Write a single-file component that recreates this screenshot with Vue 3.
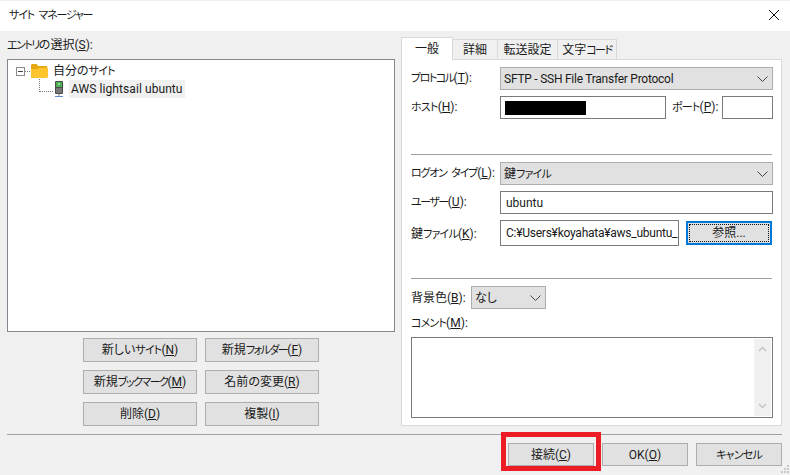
<script setup>
const siteButtons = [
  { pre: '新しい', tail: 'サイト', key: 'N' },
  { pre: '新規', tail: 'フォルダー', key: 'F' },
  { pre: '新規', tail: 'ブックマーク', key: 'M' },
  { pre: '名前の変更', tail: '', key: 'R' },
  { pre: '削除', tail: '', key: 'D' },
  { pre: '複製', tail: '', key: 'I' },
]
const tabs = [
  { pre: '一般', kana: '' },
  { pre: '詳細', kana: '' },
  { pre: '転送設定', kana: '' },
  { pre: '文字', kana: 'コード' },
]
</script>

<template>
  <div class="dialog">
    <header class="titlebar">
      <span class="k title">サイト マネージャー</span>
      <svg class="close" width="12" height="12" viewBox="0 0 12 12"><path d="M1 1l10 10M11 1L1 11" stroke="#111" stroke-width="1" fill="none"/></svg>
    </header>

    <div class="main">
      <section class="left">
        <div class="left-label"><span class="k narrow">エントリ</span>の選択(<u>S</u>):</div>
        <div class="tree">
          <div class="tree-row root-row">
            <span class="expander"><i></i></span>
            <span class="dots-h short"></span>
            <svg class="folder" width="17" height="14" viewBox="0 0 17 14">
              <path d="M0 1.500C0 .7.6 0 1.400 0h4.200l1.600 2H16v10.500c0 .8-.6 1.500-1.400 1.500H1.400C.6 14 0 13.300 0 12.500z" fill="#e3a812"/>
              <path d="M0 5h6.400l1.400-1.300H17V12.600c0 .8-.6 1.400-1.400 1.400H1.400C.6 14 0 13.400 0 12.600z" fill="#fdc42d"/>
            </svg>
            <span class="root-name">自分の<span class="k">サイト</span></span>
          </div>
          <div class="tree-row child-row">
            <span class="dots-l"></span>
            <svg class="server" width="9" height="17" viewBox="0 0 9 17">
              <rect x="0" y="0" width="8" height="13" rx="1" fill="#4c4c4c"/>
              <rect x="1" y="1" width="6" height="5" fill="#4caf50"/>
              <rect x="3" y="2" width="2" height="2" fill="#9ad79c"/>
              <rect x="1" y="7" width="6" height="5" fill="#777"/>
              <path d="M4 13v3" stroke="#777" fill="none"/>
              <path d="M0 15.500h8" stroke="#5b8fc7" fill="none"/>
            </svg>
            <span class="child-name">AWS lightsail ubuntu</span>
          </div>
        </div>
        <div class="site-buttons">
          <button v-for="b in siteButtons" :key="b.key" class="btn">{{ b.pre }}<span class="k" :class="{ narrow: b.tail.length > 3 }">{{ b.tail }}</span>(<u>{{ b.key }}</u>)</button>
        </div>
      </section>

      <section class="right">
        <div class="tabs">
          <div v-for="(t, i) in tabs" :key="t.pre" class="tab" :class="['tab' + i, { active: i === 0 }]">{{ t.pre }}<span class="k narrow">{{ t.kana }}</span></div>
        </div>
        <div class="panel">
          <div class="row r-protocol">
            <label class="lab"><span class="k narrow">プロトコル</span>(<u>T</u>):</label>
            <div class="select grow"><span class="latin">SFTP - SSH File Transfer Protocol</span><svg class="chev" width="11" height="6" viewBox="0 0 11 6"><path d="M.5.5l5 5 5-5" stroke="#444" fill="none"/></svg></div>
          </div>
          <div class="row r-host">
            <label class="lab"><span class="k">ホスト</span>(<u>H</u>):</label>
            <div class="input host"><span class="mask"></span></div>
            <label class="port-lab"><span class="k">ポート</span>(<u>P</u>):</label>
            <div class="input port"></div>
          </div>
          <div class="rule r1"></div>
          <div class="row r-logon">
            <label class="lab"><span class="k logon">ログオン タイプ</span>(<u>L</u>):</label>
            <div class="select grow"><span class="mixed">鍵<span class="k">ファイル</span></span><svg class="chev" width="11" height="6" viewBox="0 0 11 6"><path d="M.5.5l5 5 5-5" stroke="#444" fill="none"/></svg></div>
          </div>
          <div class="row r-user">
            <label class="lab"><span class="k narrow">ユーザー</span>(<u>U</u>):</label>
            <div class="input grow user">ubuntu</div>
          </div>
          <div class="row r-key">
            <label class="lab key-lab">鍵<span class="k">ファイル</span>(<u>K</u>):</label>
            <div class="input keyfile"><span class="latin">C:¥Users¥koyahata¥aws_ubuntu_</span></div>
            <button class="browse"><span>参照...</span></button>
          </div>
          <div class="rule r2"></div>
          <div class="row r-bg">
            <label class="bg-lab">背景色(<u>B</u>):</label>
            <div class="select bg"><span>なし</span><svg class="chev" width="11" height="6" viewBox="0 0 11 6"><path d="M.5.5l5 5 5-5" stroke="#444" fill="none"/></svg></div>
          </div>
          <div class="comment-lab"><span class="k">コメント</span>(<u>M</u>):</div>
          <div class="textarea">
            <div class="scroll">
              <svg width="9" height="6" viewBox="0 0 9 6"><path d="M1 5l3.500-3.500L8 5" stroke="#c4c4c4" stroke-width="1.500" fill="none"/></svg>
              <svg width="9" height="6" viewBox="0 0 9 6"><path d="M1 1l3.500 3.500L8 1" stroke="#c4c4c4" stroke-width="1.500" fill="none"/></svg>
            </div>
          </div>
        </div>
      </section>
    </div>

    <div class="separator"></div>

    <footer class="footer">
      <button class="btn foot">接続(<u>C</u>)</button>
      <button class="btn foot">OK(<u>O</u>)</button>
      <button class="btn foot"><span class="k">キャンセル</span></button>
    </footer>

    <div class="highlight"></div>
    <svg class="grip" width="10" height="10" viewBox="0 0 10 10"><path d="M7 1h2v2H7zM4 4h2v2H4zM7 4h2v2H7zM1 7h2v2H1zM4 7h2v2H4zM7 7h2v2H7z" fill="#c8c8c8"/></svg>
  </div>
</template>

<style>
html, body { margin: 0; padding: 0; background: #f0f0f0; }
</style>

<style scoped>
.dialog {
  position: relative;
  width: 790px;
  height: 475px;
  overflow: hidden;
  background: #f0f0f0;
  color: #1a1a1a;
  font-family: Roboto, "Noto Sans CJK JP", sans-serif;
  font-feature-settings: "palt";
  font-size: 12px;
  line-height: 16px;
  white-space: nowrap;
}
.k { font-size: 11px; letter-spacing: -0.8px; }
.k.narrow { letter-spacing: -1.5px; }
.k.title { letter-spacing: -1.2px; word-spacing: 3px; }
.k.logon { letter-spacing: -1.2px; word-spacing: 3px; }
.latin { letter-spacing: -0.25px; }
.titlebar {
  height: 30px;
  margin-top: 1px;
  background: #fff;
  display: flex;
  align-items: center;
  justify-content: space-between;
  padding: 0 10px 0 9px;
}
.close { display: block; margin-top: -2px; }
.main { display: flex; height: 395px; }
.left { width: 388px; margin-left: 7px; }
.left-label { height: 16px; margin-top: 6px; }
.tree {
  box-sizing: border-box;
  height: 273px;
  margin-top: 6px;
  background: #fff;
  border: 1px solid #828790;
  padding-top: 2px;
}
.tree-row { display: flex; align-items: center; height: 18px; position: relative; }
.root-row { padding-left: 8px; }
.expander {
  box-sizing: border-box;
  width: 9px; height: 9px;
  margin-top: 1px;
  border: 1px solid #8a8a8a;
  display: flex; align-items: center; justify-content: center;
}
.expander i { display: block; width: 5px; height: 1px; background: #444; }
.dots-h.short { width: 5px; border-top: 1px dotted #777; }
.folder { margin-left: 1px; }
.root-name { margin-left: 5px; margin-top: 1px; }
.child-row { padding-left: 31px; }
.dots-l {
  width: 14px; height: 13px; margin-top: -13px;
  border-left: 1px dotted #777; border-bottom: 1px dotted #777;
  box-sizing: border-box;
  transform: translateY(3px);
}
.server { margin-left: 2px; }
.child-name { margin-left: 5px; padding: 1px 2px; background: #f0f0f0; line-height: 16px; letter-spacing: 0.08px; }
.site-buttons {
  display: grid;
  grid-template-columns: 114px 114px;
  grid-auto-rows: 24px;
  column-gap: 8px;
  row-gap: 8px;
  margin: 6px 0 0 76px;
}
.btn {
  box-sizing: border-box;
  margin: 0;
  padding: 1px 0 0;
  background: #e1e1e1;
  border: 1px solid #adadad;
  color: #1a1a1a;
  font: inherit;
  font-feature-settings: "palt";
  line-height: 16px;
}
.right { width: 381px; margin-left: 6px; margin-top: 6px; }
.tabs { display: flex; align-items: flex-end; height: 22px; position: relative; z-index: 1; }
.tab {
  box-sizing: border-box;
  height: 20px;
  border: 1px solid #d9d9d9;
  border-left: 0;
  border-bottom: 0;
  background: #f0f0f0;
  text-align: center;
  line-height: 21px;
}
.tab0 { width: 52px; }
.tab1 { width: 45px; }
.tab2 { width: 60px; }
.tab3 { width: 59px; }
.tab.active {
  height: 23px;
  margin-bottom: -1px;
  background: #fff;
  border-left: 1px solid #d9d9d9;
  line-height: 22px;
}
.panel {
  box-sizing: border-box;
  height: 367px;
  background: #fff;
  border: 1px solid #d9d9d9;
  padding: 7px 8px 0 9px;
}
.row { display: flex; align-items: center; height: 23px; }
.lab { width: 89px; flex: none; }
.key-lab { padding-top: 2px; }
.select {
  box-sizing: border-box;
  height: 23px;
  background: #e1e1e1;
  border: 1px solid #adadad;
  padding-left: 3px;
  display: flex;
  align-items: center;
  justify-content: space-between;
}
.mixed { padding-top: 1px; }
.grow { flex: 1; }
.chev { margin-right: 4px; flex: none; }
.input {
  box-sizing: border-box;
  height: 23px;
  background: #fff;
  border: 1px solid #7a7a7a;
  display: flex;
  align-items: center;
  padding-left: 5px;
}
.r-host { margin-top: 6px; }
.host { width: 166px; padding-left: 4px; }
.mask { display: block; width: 81px; height: 14px; background: #000; }
.port-lab { margin-left: 6px; width: 50px; }
.port { width: 51px; }
.rule { height: 1px; background: #a0a0a0; margin-right: 1px; }
.r1 { margin-top: 35px; }
.r-logon { margin-top: 7px; }
.r-user { margin-top: 6px; }
.r-key { margin-top: 6px; height: 26px; }
.keyfile { width: 179px; height: 26px; padding-left: 5px; overflow: hidden; }
.browse {
  box-sizing: border-box;
  width: 86px;
  height: 24px;
  margin: 0 0 0 7px;
  padding: 1px;
  border: 2px solid #0078d7;
  background: #e1e1e1;
  color: #1a1a1a;
  font: inherit;
  font-feature-settings: "palt";
  display: flex;
}
.browse span {
  flex: 1;
  border: 1px dotted #111;
  line-height: 16px;
}
.r2 { margin-top: 32px; }
.r-bg { margin-top: 7px; }
.bg-lab { width: 60px; flex: none; }
.bg { width: 75px; padding-left: 3px; }
.comment-lab { height: 16px; margin-top: 6px; }
.textarea {
  box-sizing: border-box;
  width: 362px;
  height: 81px;
  margin-top: 6px;
  background: #fff;
  border: 1px solid #7a7a7a;
  display: flex;
  justify-content: flex-end;
  padding: 1px;
}
.scroll {
  width: 17px;
  background: #f0f0f0;
  display: flex;
  flex-direction: column;
  justify-content: space-between;
  align-items: center;
  padding: 7px 0;
  box-sizing: border-box;
}
.scroll svg { display: block; }
.separator { height: 1px; margin: 8px 8px 0 7px; background: #a0a0a0; }
.footer {
  display: flex;
  justify-content: flex-end;
  gap: 8px;
  margin-top: 8px;
  padding-right: 8px;
}
.foot { width: 86px; height: 23px; }
.highlight {
  position: absolute;
  left: 501px;
  top: 432px;
  width: 100px;
  height: 39px;
  box-sizing: border-box;
  border: 5px solid #ed1c24;
}
.grip { position: absolute; right: 0; bottom: 1px; }
</style>
